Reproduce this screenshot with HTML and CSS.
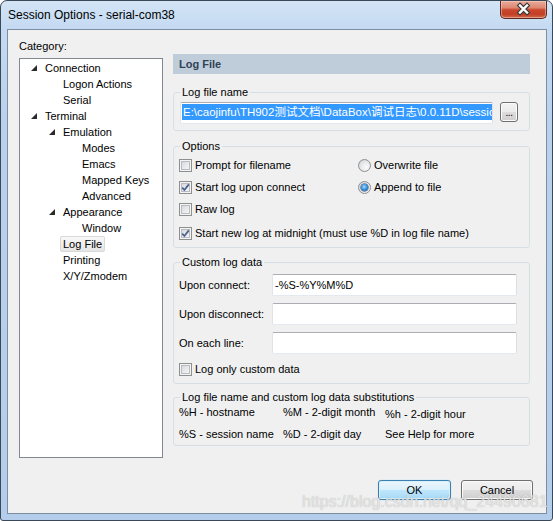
FILE: index.html
```html
<!DOCTYPE html>
<html>
<head>
<meta charset="utf-8">
<title>Session Options</title>
<link rel="stylesheet" href="styles.css">
</head>
<body>
<div class="window">
  <div class="titlebar">
    <span class="title">Session Options - serial-com38</span>
    <div class="close">
      <svg width="45" height="17" viewBox="0 0 45 17">
        <path d="M19 4.5 L26 11.5 M26 4.5 L19 11.5" stroke="#3b3b3b" stroke-width="4.6" stroke-linecap="square" fill="none"/>
        <path d="M19 4.5 L26 11.5 M26 4.5 L19 11.5" stroke="#ffffff" stroke-width="2.4" stroke-linecap="square" fill="none"/>
      </svg>
    </div>
  </div>

  <div class="client">
    <div class="main">
      <div class="left">
        <div class="cat-label">Category:</div>
        <div class="tree">
          <div class="row l0"><span class="tog"><svg width="6" height="6" viewBox="0 0 6 6"><polygon points="6,0 6,6 0,6" fill="#2a2a2a"/></svg></span><span class="txt">Connection</span></div>
          <div class="row l1"><span class="tog"></span><span class="txt">Logon Actions</span></div>
          <div class="row l1"><span class="tog"></span><span class="txt">Serial</span></div>
          <div class="row l0"><span class="tog"><svg width="6" height="6" viewBox="0 0 6 6"><polygon points="6,0 6,6 0,6" fill="#2a2a2a"/></svg></span><span class="txt">Terminal</span></div>
          <div class="row l1"><span class="tog"><svg width="6" height="6" viewBox="0 0 6 6"><polygon points="6,0 6,6 0,6" fill="#2a2a2a"/></svg></span><span class="txt">Emulation</span></div>
          <div class="row l2"><span class="tog"></span><span class="txt">Modes</span></div>
          <div class="row l2"><span class="tog"></span><span class="txt">Emacs</span></div>
          <div class="row l2"><span class="tog"></span><span class="txt">Mapped Keys</span></div>
          <div class="row l2"><span class="tog"></span><span class="txt">Advanced</span></div>
          <div class="row l1"><span class="tog"><svg width="6" height="6" viewBox="0 0 6 6"><polygon points="6,0 6,6 0,6" fill="#2a2a2a"/></svg></span><span class="txt">Appearance</span></div>
          <div class="row l2"><span class="tog"></span><span class="txt">Window</span></div>
          <div class="row l1"><span class="tog"></span><span class="txt sel">Log File</span></div>
          <div class="row l1"><span class="tog"></span><span class="txt">Printing</span></div>
          <div class="row l1"><span class="tog"></span><span class="txt">X/Y/Zmodem</span></div>
        </div>
      </div>

      <div class="right">
        <div class="header">Log File</div>

        <fieldset class="group g-name">
          <legend>Log file name</legend>
          <div class="name-row">
            <div class="textbox path"><span class="selected">E:\caojinfu\TH902测试文档\DataBox\调试日志\0.0.11D\session_%S_%Y%M%D.log</span></div>
            <div class="btn dots">...</div>
          </div>
        </fieldset>

        <fieldset class="group g-opts">
          <legend>Options</legend>
          <div class="opts">
            <div class="opt"><span class="cb"></span><span>Prompt for filename</span></div>
            <div class="opt"><span class="rb"></span><span>Overwrite file</span></div>
            <div class="opt"><span class="cb checked"><svg width="11" height="11" viewBox="0 0 11 11"><path d="M2.2 5.6 L4.4 8 L8.8 2.4" stroke="#4a5f8c" stroke-width="1.7" fill="none"/></svg></span><span>Start log upon connect</span></div>
            <div class="opt"><span class="rb on"><span class="dot"></span></span><span>Append to file</span></div>
            <div class="opt"><span class="cb"></span><span>Raw log</span></div>
            <div class="opt"></div>
            <div class="opt wide last"><span class="cb checked"><svg width="11" height="11" viewBox="0 0 11 11"><path d="M2.2 5.6 L4.4 8 L8.8 2.4" stroke="#4a5f8c" stroke-width="1.7" fill="none"/></svg></span><span>Start new log at midnight (must use %D in log file name)</span></div>
          </div>
        </fieldset>

        <fieldset class="group g-custom">
          <legend>Custom log data</legend>
          <div class="frow"><span class="flabel">Upon connect:</span><div class="textbox field">-%S-%Y%M%D</div></div>
          <div class="frow"><span class="flabel">Upon disconnect:</span><div class="textbox field"></div></div>
          <div class="frow"><span class="flabel">On each line:</span><div class="textbox field"></div></div>
          <div class="opt only"><span class="cb"></span><span>Log only custom data</span></div>
        </fieldset>

        <fieldset class="group g-subs">
          <legend>Log file name and custom log data substitutions</legend>
          <div class="subs">
            <span>%H - hostname</span>
            <span>%M - 2-digit month</span>
            <span class="low">%h - 2-digit hour</span>
            <span>%S - session name</span>
            <span>%D - 2-digit day</span>
            <span>See Help for more</span>
          </div>
        </fieldset>
      </div>
    </div>

    <div class="buttons">
      <div class="btn default">OK</div>
      <div class="btn cancel">Cancel</div>
    </div>
  </div>

  <div class="watermark">https://blog.csdn.net/qq_24490681</div>
</div>
</body>
</html>
```

FILE: styles.css
```css
* {
  box-sizing: border-box;
}

html, body {
  margin: 0;
  padding: 0;
}

body {
  width: 553px;
  height: 521px;
  overflow: hidden;
  background: #ffffff;
  font-family: "Liberation Sans", Arial, sans-serif;
  font-size: 11px;
  color: #000000;
}

.window {
  position: relative;
  width: 553px;
  height: 521px;
  border: 1px solid #3a4858;
  border-radius: 7px 7px 3px 3px;
  background: linear-gradient(to bottom, #d3e4f6 0px, #c4daf2 28px, #b9d1ec 120px, #b4cdea 100%);
  display: flex;
  flex-direction: column;
  overflow: hidden;
}

/* ---------- title bar ---------- */
.titlebar {
  height: 28px;
  flex: none;
  display: flex;
  align-items: flex-start;
}

.title {
  padding: 6px 0 0 7px;
  font-size: 12px;
  line-height: 16px;
  color: #000000;
}

.close {
  margin-left: auto;
  margin-right: 5px;
  margin-top: -1px;
  width: 47px;
  height: 19px;
  border: 1px solid #5b2a20;
  border-top-color: #7a3a2c;
  border-radius: 0 0 5px 5px;
  background: linear-gradient(to bottom, #e9ab9c 0%, #de8670 40%, #c9472d 52%, #c23f25 78%, #d26b4d 100%);
  box-shadow: inset 0 0 0 1px rgba(255, 220, 210, 0.45);
  display: flex;
}

/* ---------- client ---------- */
.client {
  margin: 0 5px 0 6px;
  height: 485px;
  flex: none;
  border: 1px solid #7e8ea2;
  background: #f0f0f0;
  padding-top: 8px;
  display: flex;
  flex-direction: column;
}

.main {
  display: flex;
  align-items: flex-start;
}

.left {
  margin-left: 11px;
  width: 144px;
  flex: none;
}

.cat-label {
  line-height: 16px;
  height: 16px;
}

.tree {
  margin-top: 4px;
  height: 400px;
  border: 1px solid #828790;
  background: #ffffff;
  padding-top: 1px;
}

.row {
  display: flex;
  height: 16px;
  line-height: 16px;
  white-space: nowrap;
}

.l0 { padding-left: 6px; }
.l1 { padding-left: 24px; }
.l2 { padding-left: 43px; }

.tog {
  width: 19px;
  flex: none;
  display: flex;
  align-items: center;
  padding-left: 5px;
}

.txt.sel {
  margin-left: -3px;
  padding: 0 2px;
  border: 1px solid #d9d9d9;
  border-radius: 2px;
  background: linear-gradient(to bottom, #f8f8f8, #e5e5e5);
  line-height: 14px;
}

/* ---------- right panel ---------- */
.right {
  margin-left: 10px;
  margin-top: 16px;
  width: 357px;
  flex: none;
}

.header {
  height: 20px;
  line-height: 20px;
  padding-left: 6px;
  background: #bfcddb;
  color: #2f4256;
  font-weight: bold;
}

.group {
  margin: 0;
  min-width: 0;
  border: 1px solid #d5dfe5;
  border-radius: 3px;
}

.group legend {
  padding: 0 2px;
  margin-left: 1px;
  line-height: 16px;
}

.g-name {
  margin-top: 10px;
  padding: 2px 0 6px 5px;
}

.g-opts {
  margin-top: 7px;
  padding: 0 0 3px 5px;
}

.g-custom {
  margin-top: 6px;
  padding: 4px 0 3px 5px;
}

.g-subs {
  margin-top: 5px;
  padding: 0 0 3px 5px;
}

/* text boxes */
.textbox {
  height: 22px;
  background: #ffffff;
  border: 1px solid;
  border-color: #abadb3 #dbdfe6 #e3e9ef #e2e3ea;
  border-radius: 2px;
  white-space: nowrap;
  overflow: hidden;
}

.name-row {
  display: flex;
  align-items: flex-start;
  margin-left: 1px;
}

.path {
  width: 313px;
  padding: 1px 1px 0 1px;
  font-family: "Liberation Sans", "Noto Sans CJK SC", sans-serif;
  font-size: 11.5px;
}

.selected {
  display: inline-block;
  background: #3399ff;
  color: #ffffff;
  line-height: 16px;
  height: 16px;
  padding-left: 1px;
}

/* buttons */
.btn {
  border: 1px solid #707070;
  border-radius: 3px;
  background: linear-gradient(to bottom, #f2f2f2 0%, #ebebeb 50%, #dddddd 50%, #cfcfcf 100%);
  box-shadow: inset 0 0 0 1px #fbfbfb;
  text-align: center;
  color: #000000;
}

.dots {
  margin-left: 7px;
  width: 18px;
  height: 20px;
  line-height: 18px;
  font-size: 10px;
  letter-spacing: -0.5px;
  padding-top: 1px;
  overflow: hidden;
}

/* options */
.opts {
  display: grid;
  grid-template-columns: 179px auto;
}

.opt {
  height: 22px;
  display: flex;
  align-items: center;
  white-space: nowrap;
}

.opt.wide {
  grid-column: 1 / span 2;
}

.opt.last {
  margin-top: 2px;
}

.cb {
  width: 13px;
  height: 13px;
  flex: none;
  margin-right: 3px;
  border: 1px solid #8e8f8f;
  background: linear-gradient(135deg, #cdd1d6 0%, #e9eaec 55%, #fbfbfb 100%);
  box-shadow: inset 0 0 0 1px #f4f4f4, inset 0 0 0 2px #b8bcc2;
  display: flex;
  align-items: center;
  justify-content: center;
}

.rb {
  width: 13px;
  height: 13px;
  flex: none;
  margin-right: 3px;
  border: 1px solid #8e8f8f;
  border-radius: 50%;
  background: radial-gradient(circle at 65% 65%, #fbfbfb 0%, #e4e5e7 55%, #c7cbd0 100%);
  display: flex;
  align-items: center;
  justify-content: center;
}

.rb .dot {
  width: 7px;
  height: 7px;
  border-radius: 50%;
  background: radial-gradient(circle at 45% 40%, #aee0fb 0%, #3b95df 45%, #184c8e 100%);
  box-shadow: 0 0 0 0.5px #1b3e6e;
}

/* custom log data */
.frow {
  display: flex;
  align-items: center;
  height: 22px;
}

.frow + .frow {
  margin-top: 7px;
}

.flabel {
  width: 93px;
  flex: none;
}

.field {
  width: 245px;
  line-height: 20px;
  padding-left: 2px;
}

.opt.only {
  margin-top: 4px;
}

/* substitutions */
.subs {
  display: grid;
  grid-template-columns: 104px 102px auto;
  row-gap: 4px;
  line-height: 16px;
  margin-top: -1px;
  white-space: nowrap;
}

.subs .low {
  padding-top: 2px;
}

/* dialog buttons */
.buttons {
  margin-top: 22px;
  display: flex;
  justify-content: flex-end;
  gap: 10px;
  padding-right: 13px;
}

.buttons .btn {
  height: 20px;
  line-height: 18px;
}

.btn.default {
  width: 73px;
  border-color: #3c7fb1;
  background: linear-gradient(to bottom, #eaf6fd 0%, #d9f0fc 50%, #bee6fd 50%, #a7d9f5 100%);
  box-shadow: inset 0 0 0 1px #d8f0fc, 0 0 1px #7fc6ee;
}

.btn.cancel {
  width: 72px;
}

/* watermark overlay */
.watermark {
  position: absolute;
  left: 301px;
  top: 492px;
  font-family: "Liberation Sans", Arial, sans-serif;
  font-size: 16px;
  line-height: 18px;
  color: rgba(236, 236, 236, 0.85);
  text-shadow: 0 0 1px rgba(120, 120, 120, 0.55);
  white-space: nowrap;
  pointer-events: none;
}
```
